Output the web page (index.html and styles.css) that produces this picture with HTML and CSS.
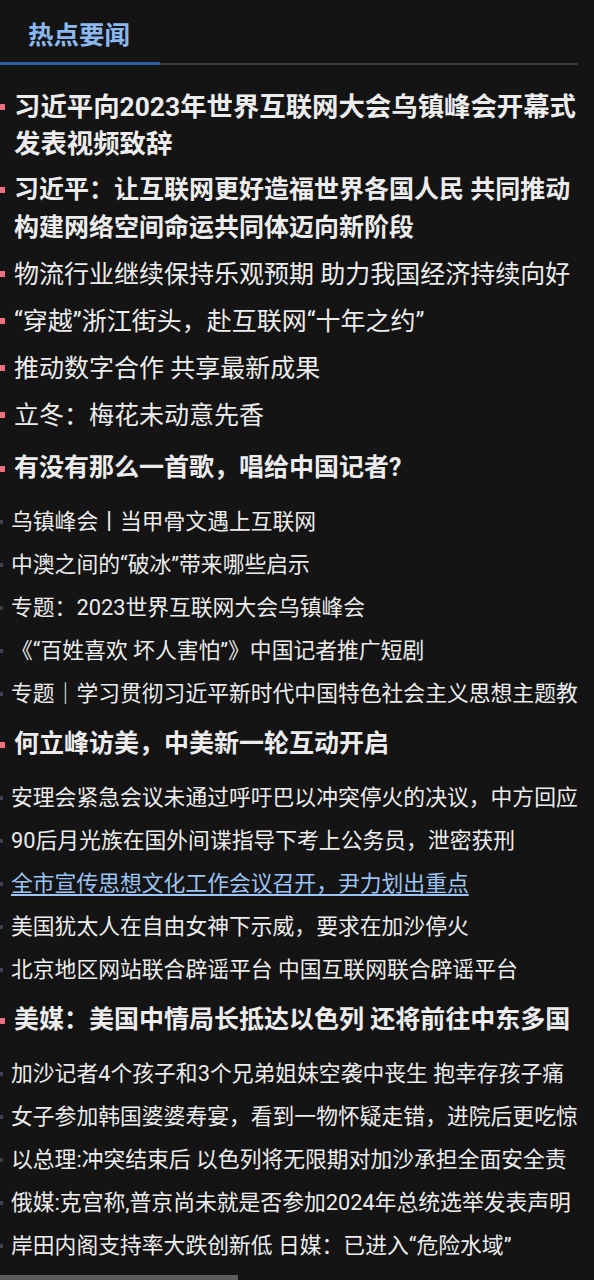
FILE: index.html
```html
<!DOCTYPE html>
<html lang="zh-CN">
<head>
<meta charset="utf-8">
<title>热点要闻</title>
<link rel="stylesheet" href="styles.css">
</head>
<body>
<div class="page">
  <div class="tabs">
    <div class="tab tab-active">热点要闻</div>
  </div>
  <ul class="news">
    <li class="item lead lead-top"><span class="txt">习近平向2023年世界互联网大会乌镇峰会开幕式发表视频致辞</span></li>
    <li class="item lead lead-sub"><span class="txt">习近平：让互联网更好造福世界各国人民 共同推动构建网络空间命运共同体迈向新阶段</span></li>
    <li class="item plain"><span class="txt">物流行业继续保持乐观预期 助力我国经济持续向好</span></li>
    <li class="item plain"><span class="txt">“穿越”浙江街头，赴互联网“十年之约”</span></li>
    <li class="item plain"><span class="txt">推动数字合作 共享最新成果</span></li>
    <li class="item plain"><span class="txt">立冬：梅花未动意先香</span></li>

    <li class="item head"><span class="txt">有没有那么一首歌，唱给中国记者?</span></li>
    <li class="item small"><span class="txt">乌镇峰会丨当甲骨文遇上互联网</span></li>
    <li class="item small"><span class="txt">中澳之间的“破冰”带来哪些启示</span></li>
    <li class="item small"><span class="txt">专题：2023世界互联网大会乌镇峰会</span></li>
    <li class="item small"><span class="txt">《“百姓喜欢 坏人害怕”》中国记者推广短剧</span></li>
    <li class="item small"><span class="txt">专题｜学习贯彻习近平新时代中国特色社会主义思想主题教育</span></li>

    <li class="item head"><span class="txt">何立峰访美，中美新一轮互动开启</span></li>
    <li class="item small"><span class="txt">安理会紧急会议未通过呼吁巴以冲突停火的决议，中方回应</span></li>
    <li class="item small"><span class="txt">90后月光族在国外间谍指导下考上公务员，泄密获刑</span></li>
    <li class="item small"><a class="txt link" href="#">全市宣传思想文化工作会议召开，尹力划出重点</a></li>
    <li class="item small"><span class="txt">美国犹太人在自由女神下示威，要求在加沙停火</span></li>
    <li class="item small"><span class="txt">北京地区网站联合辟谣平台 中国互联网联合辟谣平台</span></li>

    <li class="item head"><span class="txt">美媒：美国中情局长抵达以色列 还将前往中东多国</span></li>
    <li class="item small"><span class="txt">加沙记者4个孩子和3个兄弟姐妹空袭中丧生 抱幸存孩子痛哭</span></li>
    <li class="item small"><span class="txt">女子参加韩国婆婆寿宴，看到一物怀疑走错，进院后更吃惊</span></li>
    <li class="item small"><span class="txt">以总理:冲突结束后 以色列将无限期对加沙承担全面安全责任</span></li>
    <li class="item small"><span class="txt">俄媒:克宫称,普京尚未就是否参加2024年总统选举发表声明</span></li>
    <li class="item small"><span class="txt">岸田内阁支持率大跌创新低 日媒：已进入“危险水域”</span></li>
  </ul>
</div>
<div class="hscroll"></div>
</body>
</html>
```
FILE: styles.css
```css
html, body {
  margin: 0;
  padding: 0;
  background: #141414;
}

body {
  font-family: Roboto, "Noto Sans CJK SC", sans-serif;
  color: #ececec;
  overflow: hidden;
}

.page {
  width: 586px;
}

.tabs {
  display: flex;
  width: 578px;
  border-bottom: 2px solid #3a3a3a;
}

.tab {
  width: 132px;
  padding: 16px 0 8px 28px;
  line-height: 38px;
  font-size: 25.5px;
  font-weight: 700;
  color: #8cb8f0;
  border-bottom: 3px solid #2f5ca8;
  margin-bottom: -2px;
}

.news {
  list-style: none;
  margin: 0;
  padding: 18.75px 0 0 0;
}

.item {
  display: flex;
  align-items: flex-start;
}

.item::before {
  content: "";
  flex: none;
}

.txt {
  min-width: 0;
  color: inherit;
}

.lead {
  font-weight: 700;
}

.lead-top {
  font-size: 26.4px;
  line-height: 37px;
  padding: 5px 0;
}

.lead-sub {
  font-size: 25px;
  line-height: 38px;
  padding: 3.25px 0 3.75px;
}

.lead::before {
  width: 5px;
  height: 6px;
  background: #ee6f80;
}

.lead-top::before {
  margin: 15.5px 9px 0 0;
}

.lead-sub::before {
  margin: 16px 9px 0 0;
}

.plain {
  font-size: 25px;
  line-height: 47px;
}

.plain::before {
  width: 5px;
  height: 6px;
  margin: 20.5px 9px 0 0;
  background: #ee6f80;
}

.head {
  font-size: 25px;
  font-weight: 700;
  line-height: 46.5px;
  padding: 6.5px 0 8px;
}

.head::before {
  width: 5px;
  height: 6px;
  margin: 20.5px 9px 0 0;
  background: #ee6f80;
}

.small {
  width: 580px;
  font-size: 21.8px;
  line-height: 43px;
}

.small .txt {
  max-height: 43px;
  overflow: hidden;
}

.small::before {
  width: 3px;
  height: 4px;
  margin: 20px 8px 0 0;
  background: #3c4250;
}

.link {
  color: #9cc4f4;
  text-decoration: underline;
  text-underline-offset: 3px;
}

.hscroll {
  position: fixed;
  left: 0;
  bottom: 0;
  width: 238px;
  height: 5px;
  background: #5c5c5c;
}
```
